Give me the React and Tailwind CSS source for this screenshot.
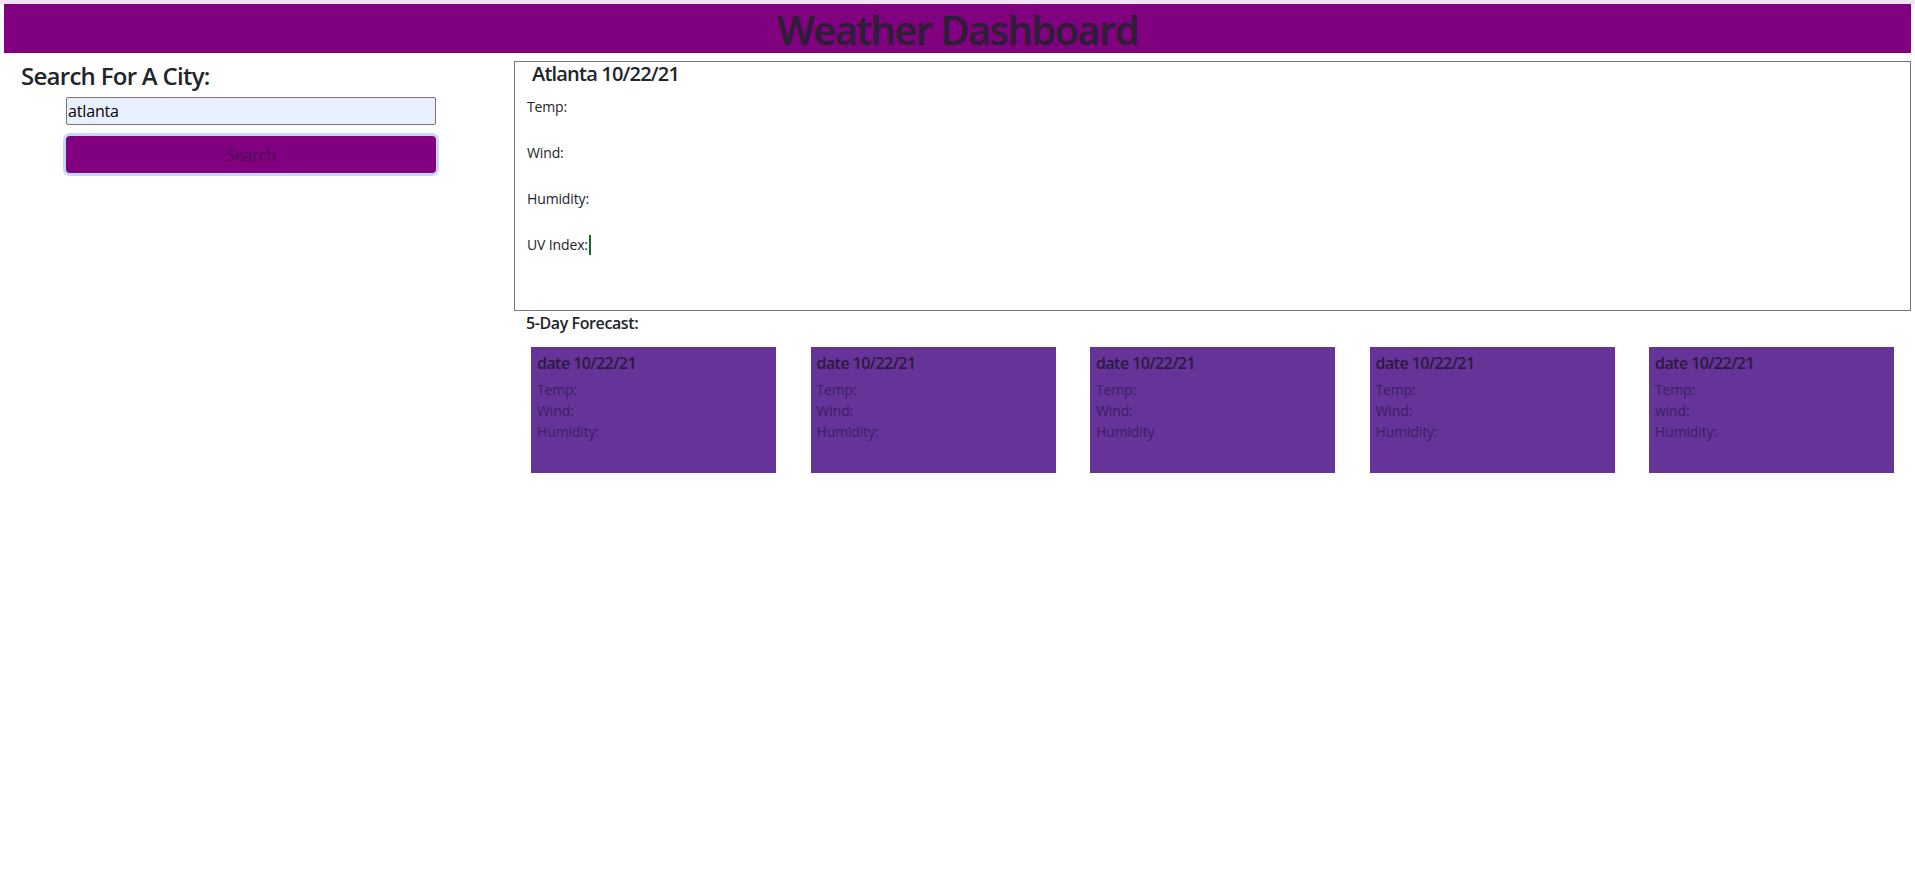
import React from "react";

const days = [
  { t: "Temp:", w: "Wind:", h: "Humidity:" },
  { t: "Temp:", w: "Wind:", h: "Humidity:" },
  { t: "Temp:", w: "Wind:", h: "Humidity" },
  { t: "Temp:", w: "Wind:", h: "Humidity:" },
  { t: "Temp:", w: "wind:", h: "Humidity:" },
];

export default function App() {
  return (
    <div className="min-h-screen w-full bg-white font-['Open_Sans',sans-serif] text-[#212529]">
      <div className="h-[4px] bg-[#f3e2f3]" />
      <header className="mx-[4px] flex h-[49px] items-center justify-center bg-[#800080]">
        <h1 className="mt-[2px] text-[40px] font-semibold leading-none tracking-[-0.04em] text-[#2b1f33]">Weather Dashboard</h1>
      </header>

      <div className="mt-[8px] flex">
        <aside className="w-[514px] shrink-0">
          <h2 className="pl-[21px] text-[24px] font-semibold leading-[29px] tracking-[-0.03em]">Search For A City:</h2>
          <div className="ml-[66px] mt-[7px] w-[370px]">
            <input
              readOnly
              value="atlanta"
              className="block h-[28px] w-full rounded-[2px] border border-[#767676] bg-[#e8f0fe] px-[1px] text-[16px] leading-[26px] tracking-[-0.01em] text-black outline-none"
            />
            <button className="mt-[11px] block h-[37px] w-full rounded-[4px] bg-[#800080] text-[16px] tracking-[-0.01em] text-[#4e0b54] ring-[3px] ring-[#c3d8f5]">
              Search
            </button>
          </div>
        </aside>

        <main className="mr-[4px] flex-1">
          <section className="h-[250px] border border-[#777777]">
            <h2 className="pl-[17px] text-[20px] font-semibold leading-[24px] tracking-[-0.04em]">Atlanta 10/22/21</h2>
            <div className="mt-[11px] pl-[12px] text-[14px] leading-[20px] tracking-[-0.01em]">
              <p className="mb-[26px]">Temp:</p>
              <p className="mb-[26px]">Wind:</p>
              <p className="mb-[26px]">Humidity:</p>
              <p className="flex items-center">
                UV Index:
                <span className="ml-[1px] inline-block h-[20px] w-[2px] bg-[#136b1e]" />
              </p>
            </div>
          </section>

          <h3 className="mt-[2px] pl-[12px] text-[16px] font-semibold leading-[20px] tracking-[-0.025em]">5-Day Forecast:</h3>

          <div className="mt-[14px] flex justify-between px-[17px]">
            {days.map((d, i) => (
              <div key={i} className="h-[126px] w-[245px] bg-[#663399] px-[6px] pt-[6px]">
                <h4 className="text-[16px] font-semibold leading-[20px] tracking-[-0.035em] text-[#2a1b3d]">date 10/22/21</h4>
                <div className="mt-[6px] text-[14px] leading-[21px] tracking-[-0.01em] text-[#3a2064]">
                  <p>{d.t}</p>
                  <p>{d.w}</p>
                  <p>{d.h}</p>
                </div>
              </div>
            ))}
          </div>
        </main>
      </div>
    </div>
  );
}
